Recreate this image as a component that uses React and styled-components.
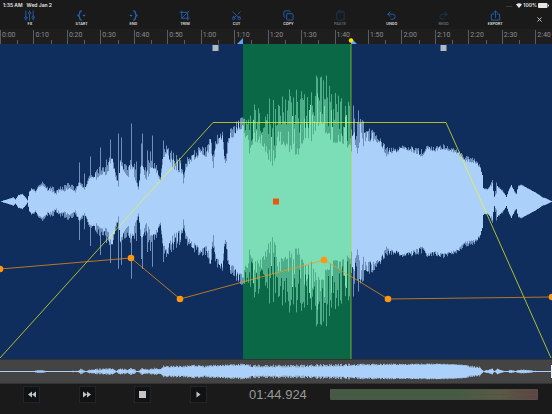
import React from 'react'
import styled, { createGlobalStyle } from 'styled-components'
import { Clipboard, Copy, Redo2, Scissors, Undo2, X } from 'lucide-react'

const GlobalStyle = createGlobalStyle`
  * { box-sizing: border-box; }
  body {
    margin: 0;
    background: #1a1a1a;
    font-family: Inter, 'Liberation Sans', sans-serif;
  }
  button {
    border: 0;
    padding: 0;
    background: none;
    font: inherit;
    color: inherit;
    cursor: pointer;
  }
`

const Screen = styled.div`
  display: flex;
  flex-direction: column;
  height: 100vh;
  overflow: hidden;
`

const StatusBar = styled.header`
  display: flex;
  align-items: center;
  gap: 4px;
  height: 10px;
  padding: 0 3px;
  color: #e6e6e6;
  font-size: 5px;
  font-weight: 600;
  line-height: 10px;
`

const Signal = styled.span`
  margin-left: auto;
  color: #999;
`

const StatusIcons = styled.div`
  display: flex;
  align-items: center;
  gap: 1px;
`

const Toolbar = styled.nav`
  display: flex;
  height: 19px;
  padding-left: 4px;
`

const Tool = styled.button`
  flex: 1;
  display: flex;
  flex-direction: column;
  align-items: center;
  color: #2260b0;
  opacity: ${props => (props.disabled ? 0.4 : 1)};

  svg {
    width: 11px;
    height: 11px;
  }
`

const ToolLabel = styled.span`
  color: #e0e0e0;
  font-family: Roboto, sans-serif;
  font-size: 4px;
  font-weight: 500;
  line-height: 6px;
`

const Close = styled.button`
  display: flex;
  align-items: center;
  justify-content: center;
  width: 31px;
  padding-left: 5px;
  color: #d8d8d8;
`

const Ruler = styled.div`
  position: relative;
  display: flex;
  height: 15px;
  overflow: hidden;
  background: #1e1e1e;
`

const Mark = styled.div`
  flex: 0 0 calc(100% / 16.5);
  display: grid;
  grid-template-columns: 1fr 1fr;
  height: 14px;
  margin-top: 1px;
  border-left: 1px solid #5c5c5c;
`

const MarkLabel = styled.span`
  padding-left: 1px;
  color: #8c8c8c;
  font-family: Roboto, sans-serif;
  font-size: 7px;
  line-height: 10px;
`

const MinorTick = styled.span`
  align-self: end;
  height: 4px;
  border-left: 1px solid #5c5c5c;
`

const RulerPins = styled.svg`
  position: absolute;
  inset: 0;
  width: 100%;
  height: 100%;
`

const Editor = styled.main`
  flex: 1;
  min-height: 0;
  background: #0f2e5d;
`

const Drawing = styled.svg`
  display: block;
  width: 100%;
  height: 100%;
`

const Overview = styled.section`
  height: 25px;
  border-top: 1px solid #333;
  border-bottom: 1px solid #333;
  background: #444;
`

const Transport = styled.footer`
  display: grid;
  grid-template-columns: repeat(4, 10.4%) 1fr 39%;
  align-items: start;
  height: 30px;
  padding: 2px 14px 0 4px;
`

const TransportCell = styled.div`
  display: flex;
  justify-content: center;
`

const TransportButton = styled.button`
  display: flex;
  align-items: center;
  justify-content: center;
  width: 17px;
  height: 17px;
  border: 1px solid #222527;
  background: #111213;
  color: #c4c4c4;
`

const Time = styled.output`
  color: #999;
  font-family: 'Liberation Sans', Arial, sans-serif;
  font-size: 13px;
  line-height: 17px;
  text-align: center;
`

const Meter = styled.div`
  display: flex;
  flex-direction: column;
  gap: 1px;
  height: 11px;
  margin-top: 3px;
  padding: 1px;
  border-radius: 1px;
  background: #505250;
`

const Channel = styled.div`
  flex: 1;
  background: linear-gradient(90deg, #435c42 0%, #435c42 60%, #5a5a40 82%, #5e4c40 92%, #624242 100%);
`

const Line = ({ children, ...rest }) => (
  <svg
    viewBox="0 0 24 24"
    fill="none"
    stroke="currentColor"
    strokeWidth="2"
    strokeLinecap="round"
    strokeLinejoin="round"
    {...rest}
  >
    {children}
  </svg>
)

const FxIcon = () => (
  <Line>
    <path d="M4 2v12M4 20v2M12 2v2M12 10v12M20 2v11M20 19v3" />
    <circle cx="4" cy="17" r="2.6" />
    <circle cx="12" cy="7" r="2.6" />
    <circle cx="20" cy="16" r="2.6" />
  </Line>
)

const StartIcon = () => (
  <Line strokeWidth="3">
    <path d="M12 2C8 2 8 4 8 7s0 4-4 5c4 1 4 2 4 5s0 5 4 5M16 12h3" />
  </Line>
)

const EndIcon = () => (
  <Line strokeWidth="3">
    <path d="M12 2c4 0 4 2 4 5s0 4 4 5c-4 1-4 2-4 5s0 5-4 5M5 12h3" />
  </Line>
)

const TrimIcon = () => (
  <Line>
    <path d="M6 2v16h16M2 5h17v17M6 18L22 2" />
  </Line>
)

const ExportIcon = () => (
  <Line>
    <path d="M8 9H3v13h18V9h-5M12 16V2M8 6l4-4 4 4" />
  </Line>
)

const tools = [
  { label: 'FX', icon: <FxIcon /> },
  { label: 'START', icon: <StartIcon /> },
  { label: 'END', icon: <EndIcon /> },
  { label: 'TRIM', icon: <TrimIcon /> },
  { label: 'CUT', icon: <Scissors style={{ transform: 'rotate(-90deg)' }} /> },
  { label: 'COPY', icon: <Copy /> },
  { label: 'PASTE', icon: <Clipboard />, disabled: true },
  { label: 'UNDO', icon: <Undo2 /> },
  { label: 'REDO', icon: <Redo2 />, disabled: true },
  { label: 'EXPORT', icon: <ExportIcon /> },
]

const marks = Array.from({ length: 17 }, (_, i) => `${Math.floor(i / 6)}:${i % 6}0`)

// [x, body height, peak height], measured from the centre line
const envelope = [
  [0, 0, 0], [10, 3, 3], [13, 4, 4], [15, 2, 2], [18, 6, 7], [22, 7, 8], [25, 4, 4], [27, 1, 2],
  [29, 9, 10], [31, 12, 14], [35, 9, 12], [38, 14, 16], [42, 16, 20], [46, 13, 15], [48, 8, 15],
  [52, 9, 17], [56, 7, 12], [60, 11, 17], [64, 10, 17], [69, 13, 21], [75, 9, 15], [79, 18, 20],
  [84, 11, 16], [90, 23, 28], [95, 20, 32], [100, 27, 36], [104, 24, 35], [108, 30, 46], [111, 42, 50],
  [114, 28, 36], [118, 14, 20], [120, 38, 45], [124, 29, 38], [128, 24, 38], [131, 36, 44], [134, 24, 38],
  [138, 12, 20], [141, 36, 46], [146, 20, 36], [149, 27, 44], [152, 34, 42], [157, 27, 36], [160, 20, 27],
  [163, 44, 60], [168, 44, 58], [172, 34, 52], [176, 30, 47], [182, 26, 44], [183, 18, 28], [186, 34, 44],
  [191, 40, 48], [196, 43, 54], [202, 47, 56], [206, 44, 55], [210, 54, 66], [213, 33, 48], [216, 56, 70],
  [222, 62, 73], [225, 32, 45], [228, 56, 72], [234, 66, 78], [238, 72, 82], [243, 72, 86], [249, 48, 90],
  [254, 60, 95], [260, 58, 94], [266, 48, 92], [271, 33, 103], [276, 46, 100], [283, 58, 103],
  [290, 48, 112], [298, 46, 114], [304, 64, 112], [311, 60, 116], [316, 72, 126], [322, 76, 124],
  [328, 60, 124], [334, 58, 116], [340, 60, 108], [347, 54, 104], [351, 50, 96], [354, 60, 95],
  [357, 48, 88], [360, 64, 86], [363, 54, 82], [368, 60, 78], [374, 60, 70], [380, 57, 64], [386, 45, 56],
  [390, 48, 54], [395, 48, 54], [402, 53, 57], [410, 50, 56], [418, 46, 55], [422, 44, 53], [426, 52, 56],
  [435, 50, 55], [442, 52, 58], [450, 50, 54], [458, 47, 52], [465, 40, 46], [475, 38, 43], [480, 33, 36],
  [482, 26, 27], [483, 13, 14], [486, 11, 13], [489, 13, 16], [492, 15, 22], [494, 4, 6], [496, 8, 20],
  [498, 13, 16], [502, 10, 12], [506, 4, 5], [508, 9, 12], [511, 16, 17], [514, 9, 12], [516, 7, 9],
  [518, 15, 17], [521, 16, 17], [527, 13, 14], [535, 9, 9], [542, 4, 5], [552, 0, 0],
]

const spikes = {
  79: 39, 84: 28, 90: 45, 96: 31, 100: 54, 106: 42, 110: 62, 118: 68, 121: 64, 131: 78, 136: 40, 141: 58,
  142: 68, 147: 51, 150: 50, 152: 66, 163: 61, 166: 56, 236: 80, 254: 97, 269: 103, 282: 105, 289: 112,
  316: 126, 321: 125, 326: 126, 353: 96, 358: 91,
}

const overview = [
  [0, 0, 0], [28, 0, 0], [38, 1, 1], [42, 1, 1], [50, 0, 0], [78, 0, 1], [80, 1, 3], [86, 0, 1], [92, 1, 3],
  [100, 1, 3], [111, 2, 4], [116, 0, 1], [120, 2, 4], [127, 1, 2], [131, 2, 4], [137, 0, 1], [142, 2, 4],
  [148, 1, 2], [153, 2, 4], [160, 2, 3], [163, 4, 6], [175, 4, 6], [184, 4, 6], [193, 5, 7], [205, 4, 6],
  [215, 5, 7], [245, 6, 8], [252, 4, 7], [300, 4, 7], [340, 5, 8], [370, 6, 8], [440, 7, 8], [465, 6, 7],
  [468, 4, 6], [480, 3, 5], [483, 0, 1], [492, 2, 3], [494, 0, 0], [497, 2, 3], [505, 0, 0], [511, 1, 2],
  [515, 0, 1], [518, 1, 2], [527, 1, 2], [540, 0, 0], [552, 0, 0],
]

const noise = n => {
  const v = Math.sin(n * 127.1 + 11.7) * 43758.5453
  return v - Math.floor(v)
}

const sample = (points, x) => {
  const i = Math.max(1, points.findIndex(p => p[0] >= x))
  const [x0, b0, p0] = points[i - 1]
  const [x1, b1, p1] = points[i]
  const t = (x - x0) / (x1 - x0)
  return [b0 + (b1 - b0) * t, p0 + (p1 - p0) * t]
}

const bars = (points, mid, extra = {}) => {
  let body = ''
  let peaks = ''
  for (let x = 0; x < 552; x++) {
    const [base, peak] = sample(points, x)
    const solid = base + (peak - base) * 0.7 * noise(x) ** 3
    const tall = extra[x] || base + (peak - base) * noise(x + 900) ** 0.7
    body += `M${x} ${mid - solid}h1V${mid + solid}h-1z`
    peaks += `M${x} ${mid - tall}h1V${mid + tall * 0.99}h-1z`
  }
  return { body, peaks }
}

const mainWave = bars(envelope, 157.5, spikes)
const overviewWave = bars(overview, 11.5)

const volumePoints = [[0, 225], [131, 214], [180, 255], [324, 216], [388, 255], [552, 253]]

const WaveEditor = () => (
  <Drawing viewBox="0 0 552 315" preserveAspectRatio="none" role="img" aria-label="Waveform">
    <g fill="#abd1fa">
      <path d={mainWave.peaks} opacity="0.6" />
      <path d={mainWave.body} />
    </g>
    <rect x="243" width="108" height="315" fill="#00ff0a" fillOpacity="0.28" />
    <path d="M351 0V315" stroke="#a6e01e" strokeOpacity="0.65" />
    <path d="M0 314L213 78.5H446L551 314" fill="none" stroke="#f2fa1c" strokeOpacity="0.7" />
    <polyline points={volumePoints.join(' ')} fill="none" stroke="#ff960f" strokeOpacity="0.7" />
    {volumePoints.map(([x, y]) => (
      <circle key={x} cx={x} cy={y} r="3.3" fill="#ff960f" />
    ))}
    <rect x="273" y="154.5" width="6" height="6" fill="#ea580c" />
    <rect x="212.5" y="1" width="6" height="6" fill="#b4b8c0" />
    <rect x="440.5" y="1" width="6" height="6" fill="#b4b8c0" />
  </Drawing>
)

const App = () => {
  return (
    <Screen>
      <GlobalStyle />
      <StatusBar>
        <span>1:35 AM</span>
        <span>Wed Jan 2</span>
        <Signal>....</Signal>
        <StatusIcons>
          <svg width="6" height="5" viewBox="0 0 12 10" fill="currentColor">
            <path d="M6 10L0 3.2a9 9 0 0 1 12 0z" />
          </svg>
          <span>100%</span>
          <svg width="11" height="5" viewBox="0 0 22 10" fill="currentColor">
            <rect width="19" height="10" rx="2" />
            <rect x="20" y="3" width="2" height="4" rx="1" />
          </svg>
        </StatusIcons>
      </StatusBar>
      <Toolbar>
        {tools.map(tool => (
          <Tool key={tool.label} disabled={tool.disabled}>
            {tool.icon}
            <ToolLabel>{tool.label}</ToolLabel>
          </Tool>
        ))}
        <Close aria-label="Close">
          <X size={7} strokeWidth={3} />
        </Close>
      </Toolbar>
      <Ruler>
        {marks.map(mark => (
          <Mark key={mark}>
            <MarkLabel>{mark}</MarkLabel>
            <MinorTick />
          </Mark>
        ))}
        <RulerPins viewBox="0 0 552 15" preserveAspectRatio="none">
          <path d="M243 9v6h-6zM351 9v6h6z" fill="#5aa9f5" />
          <circle cx="351" cy="11.5" r="2.2" fill="#ffe600" />
        </RulerPins>
      </Ruler>
      <Editor>
        <WaveEditor />
      </Editor>
      <Overview>
        <Drawing viewBox="0 0 552 23" preserveAspectRatio="none" role="img" aria-label="Overview">
          <g fill="#abd1fa">
            <path d={overviewWave.peaks} opacity="0.7" />
            <path d={overviewWave.body} />
            <rect y="11" width="552" height="1" />
          </g>
          <rect x="551" y="5" width="1" height="13" fill="#e4eefa" />
        </Drawing>
      </Overview>
      <Transport>
        <TransportCell>
          <TransportButton aria-label="Rewind">
            <svg width="8" height="7" viewBox="0 0 16 14" fill="currentColor">
              <path d="M8 1v12L0 7zM16 1v12L8 7z" />
            </svg>
          </TransportButton>
        </TransportCell>
        <TransportCell>
          <TransportButton aria-label="Fast forward">
            <svg width="8" height="7" viewBox="0 0 16 14" fill="currentColor">
              <path d="M0 1v12l8-6zM8 1v12l8-6z" />
            </svg>
          </TransportButton>
        </TransportCell>
        <TransportCell>
          <TransportButton aria-label="Stop">
            <svg width="7" height="7" viewBox="0 0 7 7" fill="currentColor">
              <rect width="7" height="7" />
            </svg>
          </TransportButton>
        </TransportCell>
        <TransportCell>
          <TransportButton aria-label="Play">
            <svg width="5" height="7" viewBox="0 0 10 14" fill="currentColor">
              <path d="M1 1v12l8-6z" />
            </svg>
          </TransportButton>
        </TransportCell>
        <Time>01:44.924</Time>
        <Meter>
          <Channel />
          <Channel />
        </Meter>
      </Transport>
    </Screen>
  )
}

export default App
